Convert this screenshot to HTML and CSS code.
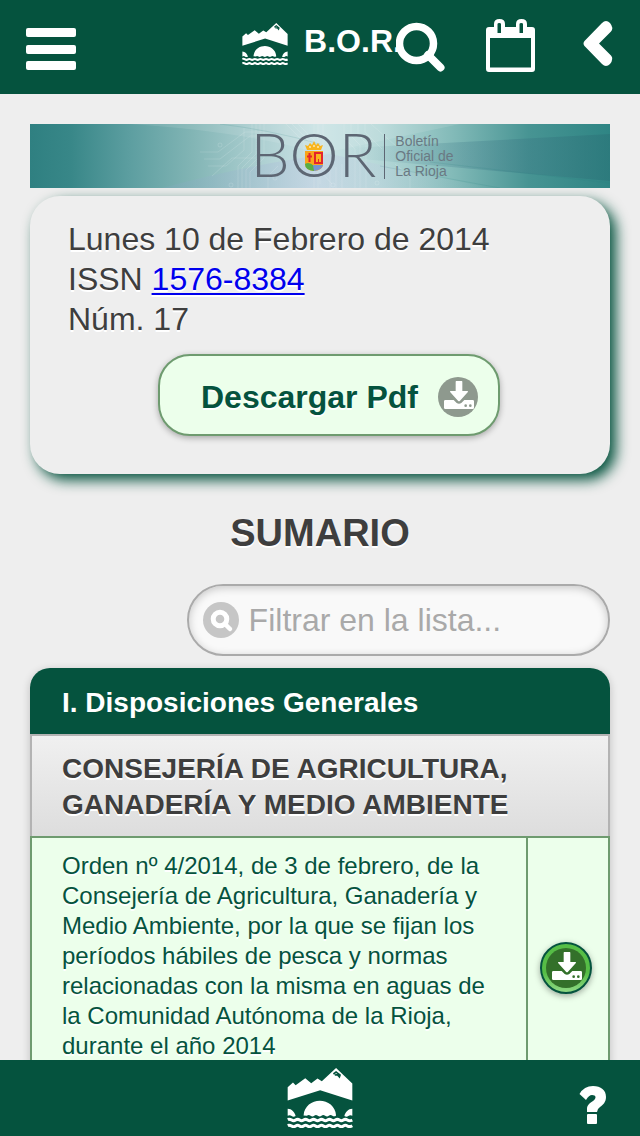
FILE: index.html
```html
<!DOCTYPE html>
<html lang="es">
<head>
<meta charset="utf-8">
<meta name="viewport" content="width=device-width, initial-scale=1">
<title>B.O.R. - Boletín Oficial de La Rioja</title>
<link rel="stylesheet" href="styles.css">
</head>
<body class="app">
<svg class="defs" aria-hidden="true">
  <symbol id="bridge" viewBox="0 0 195 181">
    <path fill="#fff" d="M0 58L16 44L24 52L53 31L71 46L90 32L103 40L146 0L195 47V98L98 67L0 98Z"/>
    <path fill="none" stroke="#05533e" stroke-width="5" d="M138 18L146 12L158 21L156 27L150 20L142 21"/>
    <path fill="#fff" d="M48 143C50 115 73 99 97 99S144 115 146 143Q141 148 135 144T124 144T113 144T102 144T91 144T80 144T69 144T58 144ZM0 123C12 123 21 133 24 145Q17 149 12 145T0 144ZM195 123C183 123 174 133 171 145Q178 149 183 145T195 144Z"/>
    <path fill="none" stroke="#fff" stroke-width="9" d="M0 155Q6 153 12 157T24 157T36 157T48 157T60 157T72 157T84 157T96 157T108 157T120 157T132 157T144 157T156 157T168 157T180 157T195 157M0 173Q6 171 12 175T24 175T36 175T48 175T60 175T72 175T84 175T96 175T108 175T120 175T132 175T144 175T156 175T168 175T180 175T195 174"/>
  </symbol>
  <symbol id="download" viewBox="0 0 120 120">
    <path fill="#fff" d="M55 12H71Q73 12 73 14V42H88Q92 42 89 46L66 71Q63 74 60 71L37 46Q34 42 38 42H53V14Q53 12 55 12Z"/>
    <path fill="#fff" fill-rule="evenodd" d="M22 69H47L56 78Q63 83 70 78L79 69H104Q108 69 108 73V92Q108 96 104 96H22Q18 96 18 92V73Q18 69 22 69ZM79 86a4 4 0 1 0 8 0a4 4 0 1 0-8 0ZM93 86a4 4 0 1 0 8 0a4 4 0 1 0-8 0Z"/>
  </symbol>
</svg>

<header class="topbar">
  <button class="icon-button menu" type="button" aria-label="Menú">
    <svg width="50" height="54" viewBox="0 0 50 54" fill="#fff"><rect y="9" width="50" height="9" rx="2"/><rect y="26" width="50" height="9" rx="2"/><rect y="42" width="50" height="9" rx="2"/></svg>
  </button>
  <h1 class="brand">
    <svg class="brand-logo" aria-hidden="true"><use href="#bridge"/></svg>
    <span>B.O.R.</span>
  </h1>
  <nav class="actions">
    <button class="icon-button" type="button" aria-label="Buscar">
      <svg width="50" height="54" viewBox="0 0 50 54" fill="none" stroke="#fff"><circle cx="20.500" cy="24.500" r="17" stroke-width="7.500"/><path d="M32 36L44.500 48.500" stroke-width="8" stroke-linecap="round"/></svg>
    </button>
    <button class="icon-button" type="button" aria-label="Calendario">
      <svg width="50" height="54" viewBox="0 0 50 54" fill="#fff" fill-rule="evenodd"><path d="M3 8H8V5Q8 0 13.500 0T19 5V8H30V5Q30 0 35.500 0T41 5V8H46Q49 8 49 11V50Q49 53 46 53H3Q0 53 0 50V11Q0 8 3 8ZM4 19V48.500H45V19ZM11.500 5V14H15V5Q15 4 13.300 4T11.500 5ZM33.500 5V14H37V5Q37 4 35.300 4T33.500 5Z"/></svg>
    </button>
    <button class="icon-button" type="button" aria-label="Volver">
      <svg width="32" height="54" viewBox="0 0 32 54" fill="#fff"><path d="M2.500 22L20 4Q24 0 28 4Q32 9 29 12.500L17 24.500L29 36.500Q32 40 28 45Q24 49 20 45L2.500 27Q.5 24.500 2.500 22Z"/></svg>
    </button>
  </nav>
</header>

<main class="content">
  <div class="banner">
    <svg class="banner-art" viewBox="0 0 580 64" preserveAspectRatio="none" aria-hidden="true">
      <defs>
        <linearGradient id="sea"><stop offset="0" stop-color="#2f8081"/><stop offset=".07" stop-color="#388788"/><stop offset=".17" stop-color="#5c9ea0"/><stop offset=".28" stop-color="#82b5b5"/><stop offset=".4" stop-color="#aed0d2"/><stop offset=".5" stop-color="#cbe3e5"/><stop offset=".6" stop-color="#b7d9d9"/><stop offset=".73" stop-color="#82bab8"/><stop offset=".86" stop-color="#479493"/><stop offset="1" stop-color="#2f8584"/></linearGradient>
        <linearGradient id="haze"><stop offset="0" stop-color="#79a9b5" stop-opacity=".5"/><stop offset=".45" stop-color="#c0cfe2" stop-opacity=".6"/><stop offset="1" stop-color="#b0ccd4" stop-opacity="0"/></linearGradient>
        <linearGradient id="beam"><stop offset="0" stop-color="#447f8d" stop-opacity="0"/><stop offset=".5" stop-color="#447f8d" stop-opacity=".35"/><stop offset="1" stop-color="#2b7478" stop-opacity=".6"/></linearGradient>
      </defs>
      <rect width="580" height="64" fill="url(#sea)"/>
      <path fill="#fff" opacity=".1" d="M100 0H430L290 30Q220 8 100 0Z"/>
      <path fill="url(#haze)" d="M132 64Q220 40 300 30L460 64Z"/>
      <path fill="url(#beam)" d="M320 24L580 10V57L320 34Z"/>
      <g fill="none" stroke="#fff" stroke-opacity=".2" stroke-width=".7">
        <path d="M170 28H188L215 8H240M174 35H190L220 12H248M178 42H196L214 26V4M182 52L202 34H226M208 64V42L222 28V0M212 64V44L226 30V0M216 64V46L230 32V0M220 64V48L234 34V0M238 64V52L248 42M256 0L274 18V30M262 0L280 18M268 0L290 22V60M284 0V64M288 0V64M293 0V50L302 60M314 0V14L325 25V64M321 0V12L330 21V64M328 0V11L336 19V64M335 0V8L352 25M341 0L366 22M300 46V64M306 43V64M312 40V64M365 40L380 52V64"/>
        <circle cx="201" cy="61" r="2"/><circle cx="190" cy="21" r="2"/><circle cx="303" cy="61" r="2"/><circle cx="347" cy="59" r="2"/><circle cx="245" cy="54" r="2"/>
      </g>
      <path fill="none" stroke="#287d80" stroke-opacity=".15" d="M350 42L470 64M400 38L580 59M190 0Q240 6 290 20"/>
    </svg>
    <div class="banner-brand">
      <span class="banner-name">B<span class="banner-o">O<svg class="crest" viewBox="0 0 18 30" aria-hidden="true"><path d="M2 9L0 4L3 5L5 2L7 4L9 0L11 4L13 2L15 5L18 4L16 9Z" fill="#f9b51d"/><path d="M4 6h2M8 5h2M12 6h2" stroke="#fff" stroke-width="1"/><path d="M0 10H18V23Q18 29 9 30Q0 29 0 23Z" fill="#f8a51b"/><path d="M9 11H18V23H9Z" fill="#e4242b"/><path d="M11 13H16V21H14V18H13V21H11Z" fill="#f9b51d"/><path d="M4.500 12V21M2 15.500H7" stroke="#e4242b" stroke-width="2"/><path d="M0 23Q4 20 9 25V30Q0 29 0 23Z" fill="#57ad45"/><path d="M8 24H18Q17 29 9 30Z" fill="#7695d0"/></svg></span>R</span>
      <span class="banner-text">Boletín<br>Oficial de<br>La Rioja</span>
    </div>
  </div>

  <section class="issue">
    <p class="issue-info">Lunes 10 de Febrero de 2014<br>ISSN <a class="issue-link" href="#issn">1576-8384</a><br>Núm. 17</p>
    <button class="pdf-button" type="button">
      <span>Descargar Pdf</span>
      <svg class="pdf-icon" aria-hidden="true"><use href="#download"/></svg>
    </button>
  </section>

  <h2 class="summary-title">SUMARIO</h2>

  <label class="filter">
    <svg class="filter-icon" viewBox="0 0 36 36" aria-hidden="true"><circle cx="17" cy="17" r="6.800" fill="none" stroke="#fff" stroke-width="5"/><path d="M22 22L27 27" stroke="#fff" stroke-width="4.500" stroke-linecap="round"/></svg>
    <input class="filter-input" type="text" placeholder="Filtrar en la lista..." aria-label="Filtrar en la lista">
  </label>

  <section class="list">
    <h3 class="list-head">I. Disposiciones Generales</h3>
    <h4 class="list-divider">CONSEJERÍA DE AGRICULTURA, GANADERÍA Y MEDIO AMBIENTE</h4>
    <article class="entry">
      <a class="entry-text" href="#orden">Orden nº 4/2014, de 3 de febrero, de la Consejería de Agricultura, Ganadería y Medio Ambiente, por la que se fijan los períodos hábiles de pesca y normas relacionadas con la misma en aguas de la Comunidad Autónoma de la Rioja, durante el año 2014</a>
      <a class="entry-download" href="#pdf" aria-label="Descargar">
        <span class="entry-badge"><svg class="entry-icon" aria-hidden="true"><use href="#download"/></svg></span>
      </a>
    </article>
  </section>
</main>

<footer class="bottombar">
  <svg class="footer-logo" aria-hidden="true"><use href="#bridge"/></svg>
  <button class="icon-button help" type="button" aria-label="Ayuda">
    <svg width="28" height="38" viewBox="0 0 28 38" fill="#fff"><path d="M.5 8Q5 0 14 0C22 0 27 4 27 11C27 16 24 19 21 21Q18 23 18 26H8V23C8 19 11 17 14 15C18 12 17 9 13 9Q10 9 7 14Z"/><rect x="8" y="28" width="10" height="10" rx="1"/></svg>
  </button>
</footer>
</body>
</html>
```
FILE: styles.css
```css
* { box-sizing: border-box; }

.app {
  margin: 0;
  height: 100vh;
  display: flex;
  flex-direction: column;
  background: #eee;
  color: #3e3e3e;
  font-family: "Liberation Sans", Arial, sans-serif;
  font-size: 32px;
}

.defs { display: none; }

.icon-button {
  display: block;
  padding: 0;
  border: 0;
  background: none;
}
.icon-button svg { display: block; }

.topbar {
  flex: none;
  display: grid;
  padding: 19px 26px 21px;
  background: #05533e;
}
.topbar > * { grid-area: 1 / 1; }
.menu { justify-self: start; }
.brand {
  justify-self: center;
  display: flex;
  gap: 16px;
  margin: 0;
  padding: 4px 0 0 4px;
  color: #fff;
  font-size: 32px;
  line-height: 36px;
}
.brand-logo { width: 46px; height: 42px; }
.actions {
  justify-self: end;
  display: flex;
  gap: 40px;
}
.actions .icon-button:last-child { margin-left: 6px; }

.content {
  flex: 1;
  min-height: 0;
  overflow-y: auto;
  scrollbar-width: none;
  padding: 30px;
}

.banner { display: grid; height: 64px; }
.banner > * { grid-area: 1 / 1; }
.banner-art { width: 100%; height: 64px; }
.banner-brand {
  z-index: 1;
  display: flex;
  align-items: center;
  padding-left: 38%;
  color: #5d6673;
}
.banner-name {
  align-self: flex-start;
  font-family: Lato, "Liberation Sans", sans-serif;
  font-size: 62px;
  font-weight: 300;
  line-height: 58px;
}
.banner-o { position: relative; }
.crest {
  position: absolute;
  left: 50%;
  top: 54%;
  width: 18px;
  height: 30px;
  transform: translate(-50%, -50%);
}
.banner-text {
  margin-left: 8px;
  padding-left: 10px;
  border-left: 1px solid #5d6673;
  color: #6a7983;
  font-size: 14px;
  line-height: 15px;
}

.issue {
  margin-top: 8px;
  padding: 23px 20px 38px 38px;
  border-radius: 30px;
  background: #eee;
  box-shadow: 6px 6px 14px #05533e;
  text-shadow: 0 2px 0 #fff;
}
.issue-info { margin: 0; line-height: 40px; }
.issue-link {
  color: #00e;
  text-decoration-thickness: 2px;
  text-underline-offset: 3px;
}
.pdf-button {
  display: flex;
  align-items: center;
  gap: 20px;
  margin: 15px auto 0;
  padding: 21px 20px 17px 41px;
  border: 2px solid #6e9b6f;
  border-radius: 32px;
  background: #ecffeb;
  box-shadow: 0 2px 6px rgba(0, 0, 0, .3);
  color: #05533e;
  font: bold 32px/40px "Liberation Sans", Arial, sans-serif;
  text-shadow: 0 2px 0 #fff;
}
.pdf-icon {
  width: 40px;
  height: 40px;
  border-radius: 50%;
  background: #8e998e;
}

.summary-title {
  margin: 37px 0 29px;
  font-size: 38px;
  line-height: 44px;
  text-align: center;
  text-shadow: 0 2px 0 #fff;
}

.filter {
  display: flex;
  align-items: center;
  gap: 10px;
  width: 73%;
  margin-left: auto;
  padding: 14px;
  border: 2px solid #aaa;
  border-radius: 36px;
  background: #f9f9f9;
  box-shadow: inset 0 2px 8px rgba(0, 0, 0, .2);
}
.filter-icon {
  flex: none;
  width: 36px;
  height: 36px;
  border-radius: 50%;
  background: #c6c6c6;
}
.filter-input {
  flex: 1;
  min-width: 0;
  height: 40px;
  padding: 0;
  border: 0;
  outline: 0;
  background: none;
  color: #333;
  font: 32px/40px "Liberation Sans", Arial, sans-serif;
}
.filter-input::placeholder { color: #a9a9a9; opacity: 1; }

.list {
  margin-top: 12px;
  border-radius: 20px 20px 0 0;
  box-shadow: 0 2px 8px rgba(0, 0, 0, .2);
}
.list-head {
  margin: 0;
  padding: 17px 32px 13px;
  border-radius: 20px 20px 0 0;
  background: #05533e;
  color: #fff;
  font-size: 28px;
  line-height: 36px;
}
.list-divider {
  margin: 0;
  padding: 15px 30px 13px;
  border: 2px solid #b3b3b3;
  border-bottom: 0;
  background: linear-gradient(#f0f0f0, #ddd);
  font-size: 28px;
  line-height: 36px;
  text-shadow: 0 2px 0 #fff;
}
.entry {
  display: flex;
  border: 2px solid #6e9b6f;
  background: #ecffeb;
}
.entry-text {
  flex: 1;
  padding: 13px 30px 37px;
  color: #05533e;
  font-size: 24px;
  line-height: 30px;
  text-decoration: none;
  text-shadow: 0 2px 0 #fff;
}
.entry-download {
  flex: none;
  display: grid;
  place-items: center;
  width: 82px;
  padding-right: 4px;
  border-left: 2px solid #6e9b6f;
}
.entry-badge {
  display: grid;
  padding: 4px;
  border: 2px solid #05533e;
  border-radius: 50%;
  background: linear-gradient(#56bd46 60%, #8ed884);
  box-shadow: 0 2px 6px rgba(0, 0, 0, .35);
}
.entry-icon {
  width: 40px;
  height: 40px;
  border-radius: 50%;
  background: #33702a;
}

.bottombar {
  flex: none;
  display: grid;
  align-items: center;
  height: 76px;
  padding: 0 33px;
  background: #05533e;
}
.bottombar > * { grid-area: 1 / 1; }
.footer-logo { justify-self: center; width: 66px; height: 60px; }
.help { justify-self: end; padding-top: 14px; }
```
